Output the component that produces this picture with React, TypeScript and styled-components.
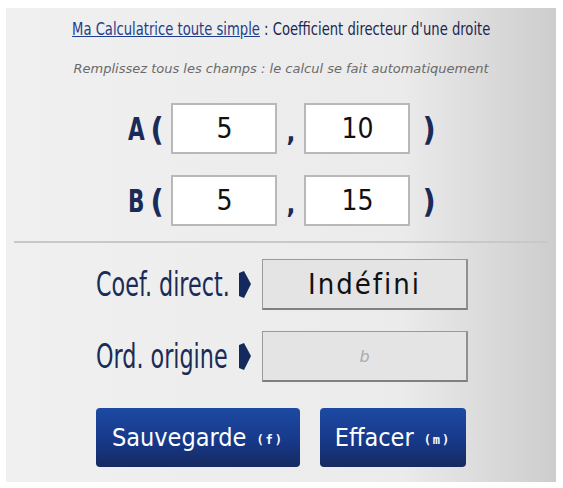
import styled, { createGlobalStyle } from 'styled-components';
import { FunctionComponent } from 'react';

const GlobalStyle = createGlobalStyle`
  html, body {
    margin: 0;
    padding: 0;
    background: #ffffff;
  }
`;

const condensed = `"DejaVu Sans Condensed", "DejaVu Sans", sans-serif`;

const Page = styled.div`
  padding: 8px 7px 6px 6px;
`;

const Panel = styled.section`
  width: 550px;
  height: 474px;
  box-sizing: border-box;
  background: linear-gradient(to right, #f0f0f0 0%, #ebebeb 72%, #cdcdcd 100%);
  display: flex;
  flex-direction: column;
  align-items: center;
  padding-top: 11px;
`;

const Title = styled.h1`
  margin: 0;
  font-family: ${condensed};
  font-weight: normal;
  font-size: 17px;
  color: #1b2752;
  white-space: nowrap;
  transform: scaleX(0.86);

  a {
    color: #1f3d8c;
    text-decoration: underline;
  }
`;

const Hint = styled.p`
  margin: 22px 0 0;
  font-family: "DejaVu Sans", Verdana, sans-serif;
  font-style: italic;
  font-size: 13px;
  color: #6a6a6a;
`;

// squeezes a condensed face a bit more, inside a box of fixed width
const Narrow = styled.span<{ $w: number; $scale?: number }>`
  display: inline-block;
  width: ${(p) => p.$w}px;
  white-space: nowrap;
  span {
    display: inline-block;
    transform: scaleX(${(p) => p.$scale ?? 0.75});
    transform-origin: left center;
  }
`;

const PointRow = styled.div<{ $first?: boolean }>`
  display: flex;
  align-items: center;
  margin-top: ${(p) => (p.$first ? '27px' : '21px')};
  margin-left: 2px;
  font-family: ${condensed};
  color: #1b2b57;
  font-size: 32px;
  font-weight: bold;
`;

const Bracket = styled.span<{ $right?: boolean }>`
  width: ${(p) => (p.$right ? 'auto' : '21px')};
  margin-left: ${(p) => (p.$right ? '12px' : '0')};
`;

const Comma = styled.span`
  width: 27px;
  text-align: center;
  font-size: 26px;
  padding-top: 6px;
`;

const CoordInput = styled.input`
  width: 106px;
  height: 51px;
  box-sizing: border-box;
  border: 2px solid #b8b8b8;
  background: #ffffff;
  text-align: center;
  font-family: ${condensed};
  font-size: 28px;
  color: #111111;
  outline: none;
`;

const Divider = styled.hr`
  width: 534px;
  margin: 15px 0 0;
  border: none;
  height: 2px;
  background: #c8c8c8;
`;

const ResultRow = styled.div<{ $first?: boolean }>`
  display: flex;
  align-items: center;
  margin-top: ${(p) => (p.$first ? '16px' : '21px')};
  margin-left: 2px;
  font-family: ${condensed};
  font-size: 33px;
  color: #1b2b57;
`;

const Arrow = styled.svg`
  margin: 0 11px 0 6px;
`;

const ResultBox = styled.div<{ $empty?: boolean }>`
  width: 206px;
  height: 51px;
  box-sizing: border-box;
  border: 1px solid #9a9a9a;
  border-bottom: 2px solid #808080;
  border-right: 2px solid #909090;
  background: #e4e4e4;
  display: flex;
  align-items: center;
  justify-content: center;
  font-family: ${(p) => (p.$empty ? '"DejaVu Sans", sans-serif' : condensed)};
  font-style: ${(p) => (p.$empty ? 'italic' : 'normal')};
  font-size: ${(p) => (p.$empty ? '16px' : '29px')};
  letter-spacing: ${(p) => (p.$empty ? '0' : '2px')};
  color: ${(p) => (p.$empty ? '#ababab' : '#111111')};
`;

const Buttons = styled.div`
  display: flex;
  gap: 20px;
  margin-top: 26px;
`;

const ActionButton = styled.button<{ $width: number }>`
  width: ${(p) => p.$width}px;
  height: 59px;
  border: none;
  border-radius: 4px;
  background: linear-gradient(to bottom, #1d4aa3 0%, #17398a 55%, #162a60 100%);
  color: #ffffff;
  font-family: ${condensed};
  font-size: 25px;
  display: flex;
  align-items: center;
  justify-content: center;
  gap: 10px;
  padding: 0;
`;

const Shortcut = styled.span`
  font-family: "DejaVu Sans Mono", monospace;
  font-weight: bold;
  font-size: 12px;
  letter-spacing: 2px;
  padding-top: 4px;
`;

const ArrowIcon = () => (
  <Arrow width="12" height="27" viewBox="0 0 12 27">
    <polygon points="0,2 5,0 12,13 5,27 0,25" fill="#142a5c" />
  </Arrow>
);

const App: FunctionComponent = () => {
  return (
    <Page>
      <GlobalStyle />
      <Panel>
        <Title>
          <a href="#">Ma Calculatrice toute simple</a> : Coefficient directeur d'une droite
        </Title>
        <Hint>Remplissez tous les champs : le calcul se fait automatiquement</Hint>

        <PointRow $first>
          <Narrow $w={22}><span>A</span></Narrow>
          <Bracket>(</Bracket>
          <CoordInput defaultValue="5" />
          <Comma>,</Comma>
          <CoordInput defaultValue="10" />
          <Bracket $right>)</Bracket>
        </PointRow>
        <PointRow>
          <Narrow $w={22}><span>B</span></Narrow>
          <Bracket>(</Bracket>
          <CoordInput defaultValue="5" />
          <Comma>,</Comma>
          <CoordInput defaultValue="15" />
          <Bracket $right>)</Bracket>
        </PointRow>

        <Divider />

        <ResultRow $first>
          <Narrow $w={137}><span>Coef. direct.</span></Narrow>
          <ArrowIcon />
          <ResultBox>Indéfini</ResultBox>
        </ResultRow>
        <ResultRow>
          <Narrow $w={137}><span>Ord. origine</span></Narrow>
          <ArrowIcon />
          <ResultBox $empty>b</ResultBox>
        </ResultRow>

        <Buttons>
          <ActionButton $width={204}>
            Sauvegarde <Shortcut>(f)</Shortcut>
          </ActionButton>
          <ActionButton $width={146}>
            Effacer <Shortcut>(m)</Shortcut>
          </ActionButton>
        </Buttons>
      </Panel>
    </Page>
  );
};

export default App;
